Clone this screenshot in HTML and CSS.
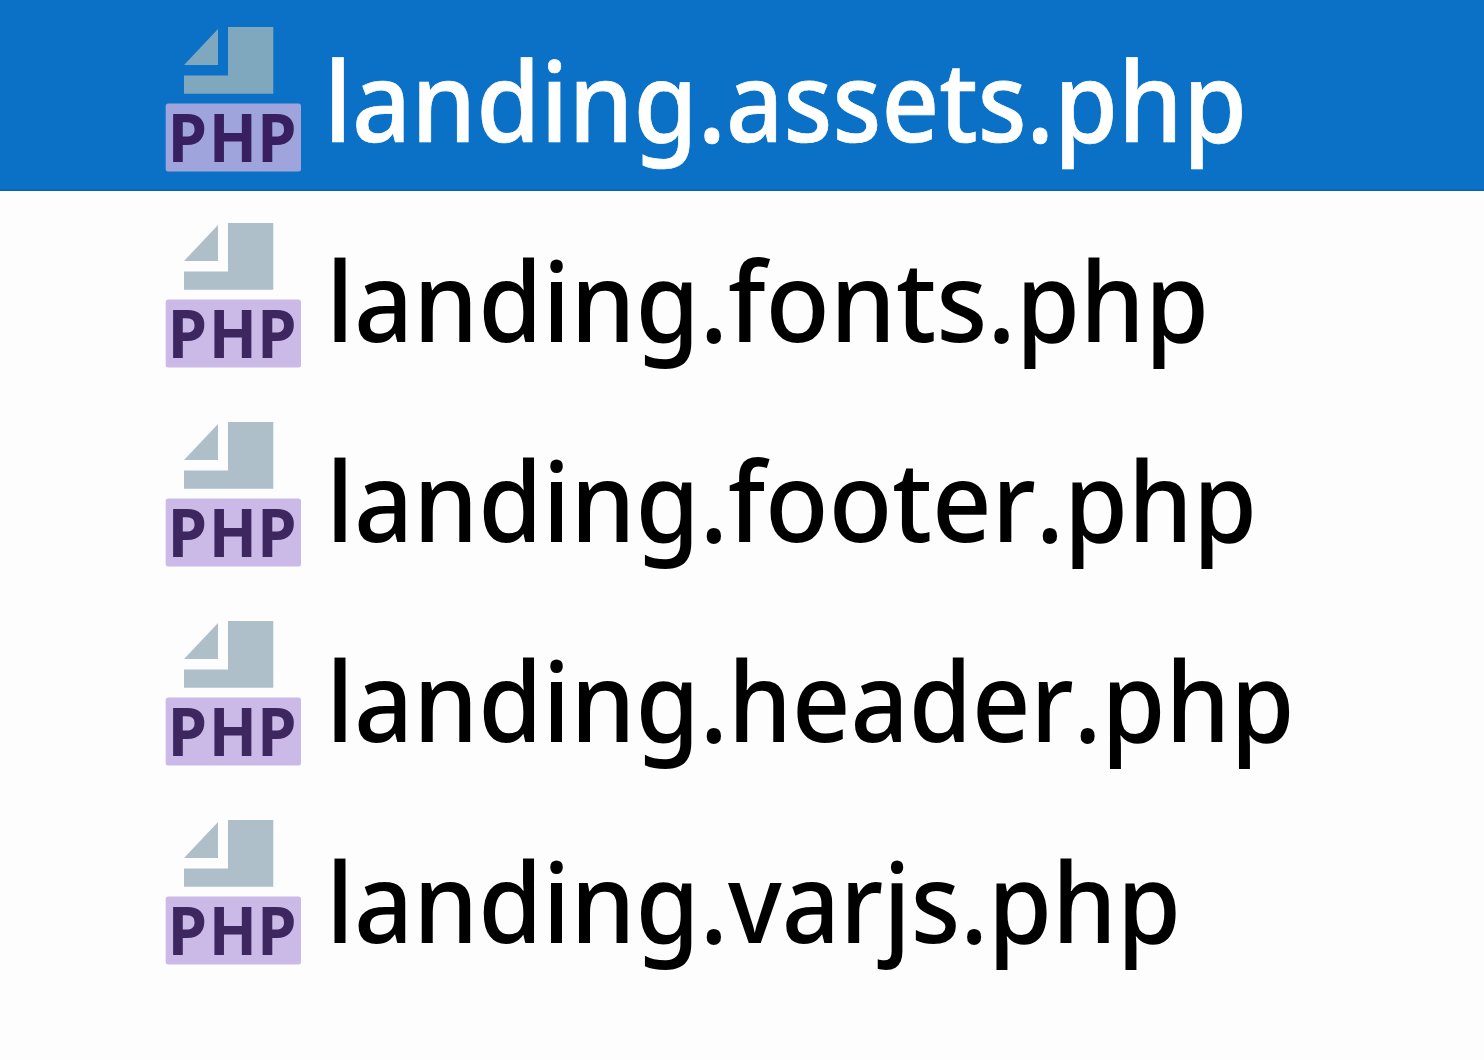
FILE: index.html
```
<!DOCTYPE html>
<html lang="en">
<head>
  <meta charset="UTF-8">
  <title>Files</title>
  <link rel="stylesheet" href="styles.css">
</head>
<body>
  <svg class="defs" width="0" height="0">
    <symbol id="php-file" viewBox="0 0 137 146">
      <path class="page" d="M53 2V38H19ZM63 0H108.3V66.7H19V48.5H63Z"/>
      <rect class="badge" x="0.7" y="76.5" width="135.3" height="68" rx="2.5"/>
      <text class="badge-text" x="3 46 97.2" y="135" transform="scale(0.95 1)">PHP</text>
    </symbol>
  </svg>

  <div class="files">
    <div class="file selected">
      <svg class="icon"><use href="#php-file"/></svg>
      <svg class="name">
        <text y="114.5"><tspan x="0" textLength="402" lengthAdjust="spacingAndGlyphs">landing.</tspan><tspan x="402" textLength="328" lengthAdjust="spacingAndGlyphs">assets.</tspan><tspan x="730" textLength="193" lengthAdjust="spacingAndGlyphs">php</tspan></text>
      </svg>
    </div>
    <div class="file">
      <svg class="icon"><use href="#php-file"/></svg>
      <svg class="name">
        <text y="118.5"><tspan x="0" textLength="402" lengthAdjust="spacingAndGlyphs">landing.</tspan><tspan x="402" textLength="288" lengthAdjust="spacingAndGlyphs">fonts.</tspan><tspan x="690" textLength="193" lengthAdjust="spacingAndGlyphs">php</tspan></text>
      </svg>
    </div>
    <div class="file">
      <svg class="icon"><use href="#php-file"/></svg>
      <svg class="name">
        <text y="119.5"><tspan x="0" textLength="402" lengthAdjust="spacingAndGlyphs">landing.</tspan><tspan x="402" textLength="336" lengthAdjust="spacingAndGlyphs">footer.</tspan><tspan x="738" textLength="193" lengthAdjust="spacingAndGlyphs">php</tspan></text>
      </svg>
    </div>
    <div class="file">
      <svg class="icon"><use href="#php-file"/></svg>
      <svg class="name">
        <text y="121"><tspan x="0" textLength="402" lengthAdjust="spacingAndGlyphs">landing.</tspan><tspan x="402" textLength="373.5" lengthAdjust="spacingAndGlyphs">header.</tspan><tspan x="775.5" textLength="193" lengthAdjust="spacingAndGlyphs">php</tspan></text>
      </svg>
    </div>
    <div class="file">
      <svg class="icon"><use href="#php-file"/></svg>
      <svg class="name">
        <text y="123"><tspan x="0" textLength="402" lengthAdjust="spacingAndGlyphs">landing.</tspan><tspan x="402" textLength="260" lengthAdjust="spacingAndGlyphs">varjs.</tspan><tspan x="662" textLength="193" lengthAdjust="spacingAndGlyphs">php</tspan></text>
      </svg>
    </div>
  </div>
</body>
</html>
```
FILE: styles.css
```
* {
  box-sizing: border-box;
}
body {
  margin: 0;
  background: #fdfdfd;
  font-family: "Noto Sans", "Open Sans", sans-serif;
  overflow: hidden;
}
.defs {
  display: block;
}
.files {
  display: flex;
  flex-direction: column;
}
.file {
  --page: #afbfca;
  --badge: #cbb9e8;
  --letters: #3e265f;
  display: flex;
  gap: 24px;
  height: 199px;
  padding: 32px 0 0 165px;
}
.selected {
  --page: #7fa7bd;
  --badge: #9fa5dc;
  --letters: #371f60;
  height: 191px;
  padding-top: 27px;
  background: #0b71c7;
  border-bottom: 2px solid #0966b6;
}
.icon {
  width: 137px;
  height: 146px;
}
.page {
  fill: var(--page);
}
.badge {
  fill: var(--badge);
}
.badge-text {
  fill: var(--letters);
  font-size: 66.5px;
  font-weight: 700;
}
.name {
  width: 1000px;
  height: 155px;
  overflow: visible;
  font-size: 110px;
  font-weight: 500;
  font-kerning: none;
  fill: #000;
}
.selected .name {
  margin-left: -2px;
  fill: #fff;
  stroke: #fff;
  stroke-width: 0.7px;
}
```
